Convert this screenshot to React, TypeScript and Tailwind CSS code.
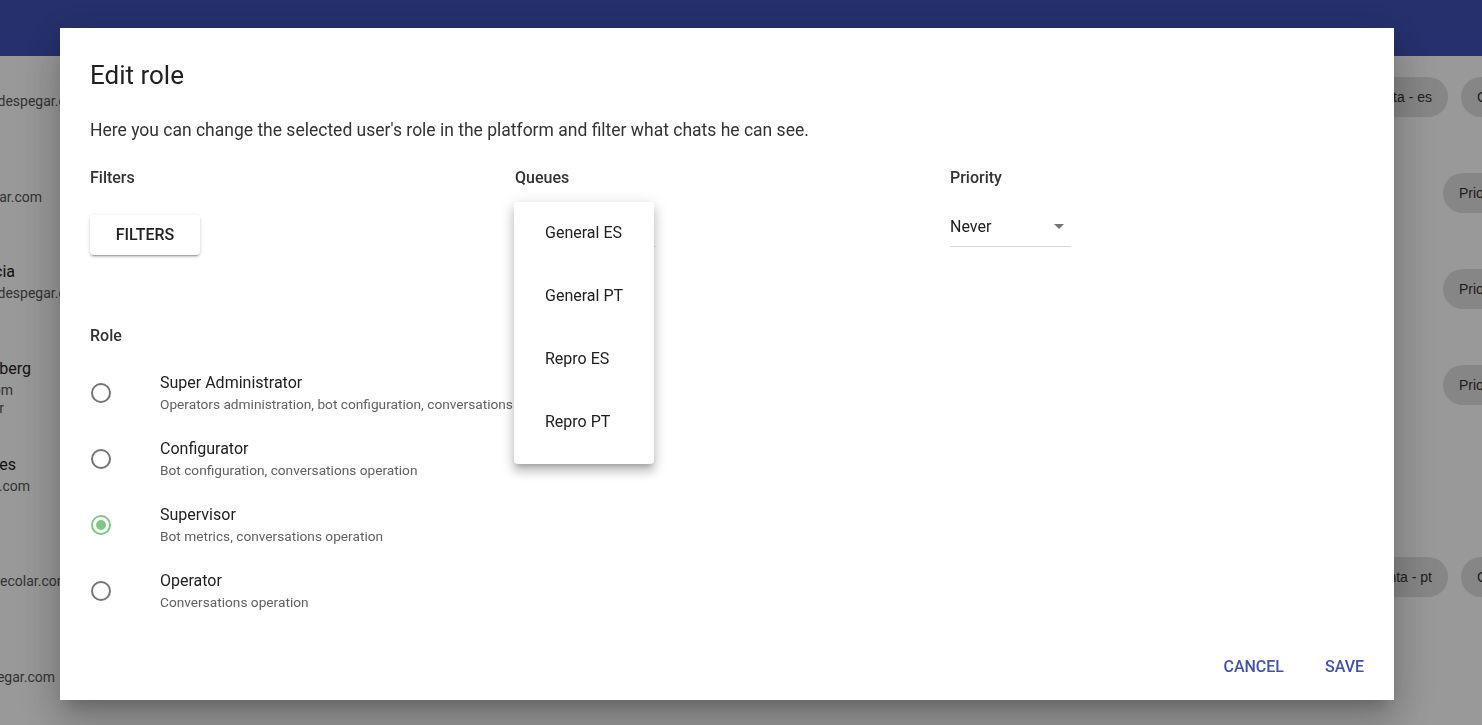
import { useState } from 'react'

const roles = [
  { id: 'super', title: 'Super Administrator', desc: 'Operators administration, bot configuration, conversations operation' },
  { id: 'config', title: 'Configurator', desc: 'Bot configuration, conversations operation' },
  { id: 'supervisor', title: 'Supervisor', desc: 'Bot metrics, conversations operation' },
  { id: 'operator', title: 'Operator', desc: 'Conversations operation' },
]

const queues = ['General ES', 'General PT', 'Repro ES', 'Repro PT']

function Chip({ label }: { label: string }) {
  return (
    <div className="h-10 shrink-0 rounded-full bg-[#e0e0e0] px-4 flex items-center font-['Liberation_Sans',Arial,sans-serif] text-sm text-[#333] whitespace-nowrap">
      {label}
    </div>
  )
}

// background page that sits under the dialog overlay
function Page() {
  return (
    <div className="h-screen w-full overflow-hidden bg-white font-['Roboto',sans-serif]">
      <div className="h-14 bg-[#3f51b5]" />
      <div className="flex flex-col">
        {/* row 1 */}
        <div className="h-[89px] flex items-center">
          <div className="flex-1">
            <div className="w-[86px] flex justify-end overflow-hidden whitespace-nowrap text-sm leading-[18px] text-[#555]">jgonzalez@despegar.com</div>
          </div>
          <div className="w-[142px] shrink-0 overflow-hidden flex gap-[13px] pb-[7px]">
            <div className="w-[108px] shrink-0 flex justify-end"><Chip label="Cuenta - es" /></div>
            <Chip label="General ES" />
          </div>
        </div>
        {/* row 2 */}
        <div className="h-[96px] flex items-center">
          <div className="flex-1 pt-2">
            <div className="w-[42px] flex justify-end overflow-hidden whitespace-nowrap text-sm leading-[18px] text-[#555]">mlopez@despegar.com</div>
          </div>
          <div className="w-[142px] shrink-0 overflow-hidden flex pl-[103px]">
            <Chip label="Priority" />
          </div>
        </div>
        {/* row 3 */}
        <div className="h-[96px] flex items-center">
          <div className="flex-1 pb-4">
            <div className="w-[15px] flex justify-end overflow-hidden whitespace-nowrap text-base leading-6 text-[#212121]">Lucia Garcia</div>
            <div className="w-[86px] flex justify-end overflow-hidden whitespace-nowrap text-sm leading-[18px] text-[#555]">lgarcia@despegar.com</div>
          </div>
          <div className="w-[142px] shrink-0 overflow-hidden flex pl-[103px]">
            <Chip label="Priority" />
          </div>
        </div>
        {/* row 4 */}
        <div className="h-[96px] flex items-center">
          <div className="flex-1 pt-1">
            <div className="w-[31px] flex justify-end overflow-hidden whitespace-nowrap text-base leading-6 text-[#212121]">Pablo Rosenberg</div>
            <div className="w-[13px] flex justify-end overflow-hidden whitespace-nowrap text-sm leading-[18px] text-[#555]">prosenberg@despegar.com</div>
            <div className="w-[4px] flex justify-end overflow-hidden whitespace-nowrap text-sm leading-[18px] text-[#555]">Supervisor</div>
          </div>
          <div className="w-[142px] shrink-0 overflow-hidden flex pl-[103px]">
            <Chip label="Priority" />
          </div>
        </div>
        {/* row 5 */}
        <div className="h-[96px] flex items-center">
          <div className="flex-1 pb-[14px]">
            <div className="w-[16px] flex justify-end overflow-hidden whitespace-nowrap text-base leading-6 text-[#212121]">Martin Torres</div>
            <div className="w-[30px] flex justify-end overflow-hidden whitespace-nowrap text-sm leading-[18px] text-[#555]">mtorres@decolar.com</div>
          </div>
          <div className="w-[142px] shrink-0" />
        </div>
        {/* row 6 */}
        <div className="h-[96px] flex items-center">
          <div className="flex-1 pt-2">
            <div className="w-[69px] flex justify-end overflow-hidden whitespace-nowrap text-sm leading-[18px] text-[#555]">fsilva@decolar.com</div>
          </div>
          <div className="w-[142px] shrink-0 overflow-hidden flex gap-[13px]">
            <div className="w-[108px] shrink-0 flex justify-end"><Chip label="Cuenta - pt" /></div>
            <Chip label="General PT" />
          </div>
        </div>
        {/* row 7 */}
        <div className="h-[96px] flex items-center">
          <div className="flex-1 pt-2">
            <div className="w-[55px] flex justify-end overflow-hidden whitespace-nowrap text-sm leading-[18px] text-[#555]">aromero@despegar.com</div>
          </div>
          <div className="w-[142px] shrink-0" />
        </div>
      </div>
    </div>
  )
}

function Radio({ checked }: { checked: boolean }) {
  return (
    <div
      className={
        checked
          ? 'w-5 h-5 rounded-full border-2 border-[#81c784] flex items-center justify-center'
          : 'w-5 h-5 rounded-full border-2 border-[#757575]'
      }
    >
      {checked && <div className="w-2.5 h-2.5 rounded-full bg-[#81c784]" />}
    </div>
  )
}

export default function App() {
  const [role, setRole] = useState('supervisor')

  return (
    <div className="relative">
      <Page />

      {/* overlay + dialog */}
      <div className="fixed inset-0 bg-black/40 flex items-start pt-[28px] pl-[60px] font-['Roboto',sans-serif]">
        <div className="w-[1334px] h-[672px] bg-white shadow-[0_11px_15px_-7px_rgba(0,0,0,0.2),0_24px_38px_3px_rgba(0,0,0,0.14),0_9px_46px_8px_rgba(0,0,0,0.12)] flex flex-col">
          <div className="px-[30px] pt-[31px]">
            <h2 className="text-[26px] leading-8 text-[#212121]">Edit role</h2>
            <p className="mt-[27px] text-[17.5px] leading-6 text-[#333]">
              Here you can change the selected user's role in the platform and filter what chats he can see.
            </p>

            <div className="mt-6 grid grid-cols-[425px_435px_1fr]">
              <div>
                <div className="text-base leading-6 font-medium text-[#333]">Filters</div>
                <button className="mt-[25px] h-10 w-[110px] rounded bg-white text-base font-medium text-[#212121] shadow-[0_3px_1px_-2px_rgba(0,0,0,0.2),0_2px_2px_0_rgba(0,0,0,0.14),0_1px_5px_0_rgba(0,0,0,0.12)]">
                  FILTERS
                </button>
              </div>

              <div className="relative">
                <div className="text-base leading-6 font-medium text-[#333]">Queues</div>
                <div className="mt-[25px] w-[140px] h-[32px] border-b border-[#d0d0d0]" />
                {/* open queue menu */}
                <div className="absolute top-[36px] -left-px w-[140px] bg-white pt-2 pb-[2px] rounded-sm shadow-[0_5px_5px_-3px_rgba(0,0,0,0.2),0_8px_10px_1px_rgba(0,0,0,0.14),0_3px_14px_2px_rgba(0,0,0,0.12)]">
                  {queues.map((q) => (
                    <div key={q} className="h-[63px] pt-[11px] pl-[31px] text-base leading-6 text-[#212121]">
                      {q}
                    </div>
                  ))}
                </div>
              </div>

              <div>
                <div className="text-base leading-6 font-medium text-[#333]">Priority</div>
                <div className="mt-[25px] w-[121px] h-8 border-b border-[#d6d6d6] flex items-start justify-between">
                  <span className="text-base leading-6 text-[#212121]">Never</span>
                  <svg width="24" height="24" viewBox="0 0 24 24" className="-mt-[1px]">
                    <path d="M7 10l5 5 5-5z" fill="rgba(0,0,0,0.54)" />
                  </svg>
                </div>
              </div>
            </div>

            <div className="mt-[69px] text-base leading-6 font-medium text-[#333]">Role</div>
            <div className="mt-3 flex flex-col">
              {roles.map((r) => (
                <div key={r.id} className="h-[66px] flex items-center cursor-pointer" onClick={() => setRole(r.id)}>
                  <div className="w-[70px] pl-px">
                    <Radio checked={role === r.id} />
                  </div>
                  <div>
                    <div className="text-base leading-5 text-[#212121]">{r.title}</div>
                    <div className="mt-px text-[13.7px] leading-5 text-[#616161]">{r.desc}</div>
                  </div>
                </div>
              ))}
            </div>
          </div>

          <div className="flex-1" />
          <div className="flex justify-end gap-[9px] pr-[14px] pb-[15px]">
            <button className="h-9 px-4 text-base font-medium text-[#3f51b5]">CANCEL</button>
            <button className="h-9 px-4 text-base font-medium text-[#3f51b5]">SAVE</button>
          </div>
        </div>
      </div>
    </div>
  )
}
